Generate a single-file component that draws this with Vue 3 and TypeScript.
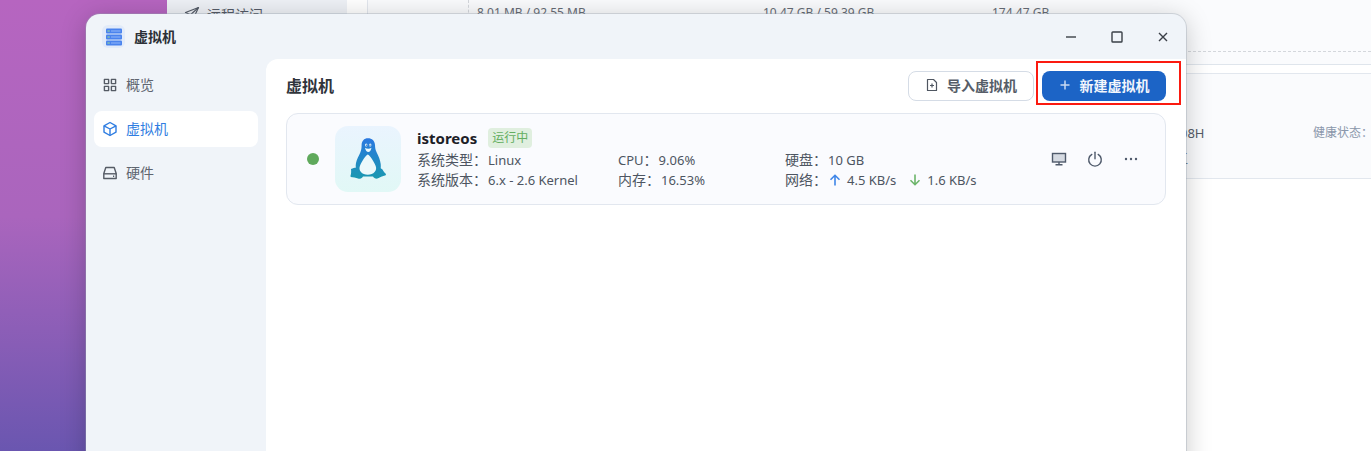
<script setup lang="ts">
interface NavItem {
  label: string
  icon: string
  active?: boolean
}

const navItems: NavItem[] = [
  { label: '概览', icon: 'grid' },
  { label: '虚拟机', icon: 'cube', active: true },
  { label: '硬件', icon: 'disk' },
]

const usage = ['8.01 MB / 92.55 MB', '10.47 GB / 59.39 GB', '174.47 GB']
</script>

<template>
  <div class="desktop">
    <!-- window behind the dialog -->
    <div class="back-win">
      <aside class="back-side">
        <div class="back-link">
          <svg width="16" height="16" viewBox="0 0 16 16" fill="none" stroke="#555c68" stroke-width="1.2" stroke-linejoin="round">
            <path d="M14.5 1.5 1.5 6.5l5 2.2 2.2 5.3z" />
            <path d="M6.5 8.7 14.5 1.5" />
          </svg>
          <span>远程访问</span>
        </div>
      </aside>
      <div class="back-main">
        <div class="back-top">
          <div class="back-stats">
            <span v-for="u in usage" :key="u">{{ u }}</span>
          </div>
        </div>
        <div class="back-card">
          <div class="back-col">
            <span>08H</span>
            <span class="back-cut">工</span>
          </div>
          <span class="back-label">健康状态：</span>
        </div>
      </div>
    </div>

    <!-- dialog -->
    <section class="dialog">
      <header class="titlebar">
        <div class="app-logo">
          <svg width="18" height="18" viewBox="0 0 18 18">
            <g v-for="y in [0.5, 6.5, 12.5]" :key="y">
              <rect x="1" :y="y" width="16" height="5" rx="1" fill="#4a83ee" />
              <rect x="2.4" :y="y + 2" width="2.4" height="1" fill="#9fe08e" />
              <rect x="6" :y="y + 2" width="9.5" height="1" fill="#8fb6f7" />
            </g>
          </svg>
        </div>
        <span class="app-name">虚拟机</span>
        <div class="win-ctrls">
          <svg width="14" height="14" viewBox="0 0 14 14" fill="none" stroke="#3a3f47" stroke-width="1.4"><path d="M2 7h10" /></svg>
          <svg width="14" height="14" viewBox="0 0 14 14" fill="none" stroke="#3a3f47" stroke-width="1.4"><rect x="2" y="2" width="10" height="10" rx="0.8" /></svg>
          <svg width="14" height="14" viewBox="0 0 14 14" fill="none" stroke="#3a3f47" stroke-width="1.4"><path d="M3 3l8 8M11 3l-8 8" /></svg>
        </div>
      </header>

      <div class="body">
        <nav class="side">
          <a v-for="item in navItems" :key="item.label" class="nav-item" :class="{ active: item.active }">
            <svg width="16" height="16" viewBox="0 0 16 16" fill="none" stroke="currentColor" stroke-width="1.4" stroke-linejoin="round">
              <template v-if="item.icon === 'grid'">
                <rect x="2.4" y="2.4" width="4.2" height="4.2" />
                <rect x="9.4" y="2.4" width="4.2" height="4.2" />
                <rect x="2.4" y="9.4" width="4.2" height="4.2" />
                <rect x="9.4" y="9.4" width="4.2" height="4.2" />
              </template>
              <template v-else-if="item.icon === 'cube'">
                <path d="M8 1.500 14 4.800v6.400L8 14.500 2 11.200V4.800z" />
                <path d="M2 4.800 8 8l6-3.200M8 8v6.500" />
              </template>
              <template v-else>
                <path d="M3.800 2.500h8.400l2 6v5H1.800v-5z" />
                <path d="M1.800 8.800h12.400" />
                <path d="M11 11.200h1.200" />
              </template>
            </svg>
            <span>{{ item.label }}</span>
          </a>
        </nav>

        <main class="content">
          <div class="toolbar">
            <h1>虚拟机</h1>
            <div class="actions">
              <button class="btn">
                <svg width="14" height="14" viewBox="0 0 14 14" fill="none" stroke="#4f5661" stroke-width="1.2" stroke-linejoin="round">
                  <path d="M2.500 1.500h6l3 3v8h-9z" />
                  <path d="M7 5.500v4M5 7.500h4" />
                </svg>
                导入虚拟机
              </button>
              <div class="primary-wrap">
                <button class="btn primary">
                  <svg width="12" height="12" viewBox="0 0 12 12" fill="none" stroke="#c7d9f2" stroke-width="1.5"><path d="M6 1.500v9M1.500 6h9" /></svg>
                  新建虚拟机
                </button>
                <span class="mark"></span>
              </div>
            </div>
          </div>

          <article class="vm-card">
            <span class="dot"></span>
            <div class="vm-icon">
              <svg width="36" height="42" viewBox="0 0 36 42">
                <defs>
                  <linearGradient id="tux" x1="0" y1="0" x2="0" y2="1">
                    <stop offset="0" stop-color="#2a78e0" />
                    <stop offset="1" stop-color="#1a98b0" />
                  </linearGradient>
                </defs>
                <path fill="url(#tux)" d="M18 .3C22 .3 24.800 3 25 7c.1 3 .5 5 1.600 7.200 2 3.800 3.600 7.800 4.100 11.800.2 1.500.1 3 0 4.300l1.800 1.200c1 2 2.500 3.500 3.500 4.500l-.3 1.200c-3.200.8-6.200 2.300-8.200 3.300-1.500.5-3-.2-4-1.200l-.5-.7H13l-.7 1c-1.300 1.200-2.800 1.400-4.300.9-2-.7-5-1.200-7.300-1.500l-.2-1.300c.7-1.700.8-4.200.5-6.700 2-.8 3.500-1.200 4.800-1.200-.2-1.800-.1-3.300.2-4.800.7-3.500 3-7.500 4.300-10.500 1-2.200 1.300-4.500 1.300-7C11.600 3 14 .3 18 .3z" />
                <path fill="#ecf9fb" d="M17.800 16.500c2.200 1 5.900 6.500 7.900 11.500 1.800 4.500-2 8.800-7.900 8.800s-9.700-4.300-7.900-8.800c2-5 5.700-10.500 7.900-11.500z" />
                <path fill="#ecf9fb" d="M15 9.800c1.800 1.200 4.700 1.200 6.500 0-.5 2.800-1.800 4.200-3.200 4.200s-2.800-1.400-3.300-4.200z" />
                <ellipse cx="16.200" cy="7" rx="1.200" ry="1.500" fill="#ecf9fb" />
                <ellipse cx="20.200" cy="7" rx="1.200" ry="1.500" fill="#ecf9fb" />
                <circle cx="16.400" cy="7.200" r=".6" fill="#1f5fb8" />
                <circle cx="20" cy="7.200" r=".6" fill="#1f5fb8" />
              </svg>
            </div>
            <div class="vm-info">
              <div class="vm-head">
                <strong>istoreos</strong>
                <span class="tag">运行中</span>
              </div>
              <div class="vm-grid">
                <span><span class="zh">系统类型：</span><span class="val">Linux</span></span>
                <span>CPU<span class="zh">：</span><span class="val">9.06%</span></span>
                <span><span class="zh">硬盘：</span><span class="val">10 GB</span></span>
                <span><span class="zh">系统版本：</span><span class="val">6.x - 2.6 Kernel</span></span>
                <span><span class="zh">内存：</span><span class="val">16.53%</span></span>
                <span class="net">
                  <span class="zh">网络：</span>
                  <svg class="arrow" width="12" height="12" viewBox="0 0 12 12" fill="none" stroke="#3f86e8" stroke-width="1.6"><path d="M6 11.500V1.500M1.500 5.800 6 1.300l4.500 4.500" /></svg>
                  <span class="rate">4.5 KB/s</span>
                  <svg class="arrow" width="12" height="12" viewBox="0 0 12 12" fill="none" stroke="#6cb56a" stroke-width="1.6"><path d="M6 .5v10M1.500 6.200 6 10.700l4.500-4.500" /></svg>
                  <span>1.6 KB/s</span>
                </span>
              </div>
            </div>
            <div class="vm-ops">
              <svg width="16" height="16" viewBox="0 0 16 16" fill="none" stroke="#4f5a6b" stroke-width="1.400">
                <rect x="1.500" y="2.500" width="13" height="8.500" fill="#d5dae2" />
                <path d="M8 11v2.500M4.500 13.800h7" />
              </svg>
              <svg width="16" height="16" viewBox="0 0 16 16" fill="none" stroke="#4f5a6b" stroke-width="1.400" stroke-linecap="round">
                <path d="M8 1.200v6.500" />
                <path d="M4.800 3.400a6.300 6.300 0 1 0 6.400 0" />
              </svg>
              <svg width="16" height="16" viewBox="0 0 16 16" fill="#4f5a6b">
                <circle cx="3" cy="8" r="1.200" />
                <circle cx="8" cy="8" r="1.200" />
                <circle cx="13" cy="8" r="1.200" />
              </svg>
            </div>
          </article>
        </main>
      </div>
    </section>
  </div>
</template>

<style scoped>
.desktop {
  position: relative;
  width: 1371px;
  height: 451px;
  overflow: hidden;
  background: linear-gradient(180deg, #b665c0 0%, #aa65bd 48%, #8c5eb7 73%, #6a56b0 100%);
  font-family: "Noto Sans", "Noto Sans CJK SC", sans-serif;
  font-size: 13px;
  color: #4d5561;
}

.back-win {
  position: absolute;
  left: 167px;
  top: 0;
  right: 0;
  bottom: 0;
  display: flex;
  background: #fff;
}
.back-side {
  width: 180px;
  flex: none;
  margin-right: 20px;
  background: #eef1f6;
}
.back-link {
  display: flex;
  align-items: center;
  gap: 7px;
  padding: 4px 0 0 17px;
  font-size: 14px;
  color: #555c68;
}
.back-main {
  flex: 1;
  min-width: 0;
  border-left: 1px solid #e3e7ee;
}
.back-top {
  position: relative;
  height: 64px;
  background: #fafbfd;
  border-bottom: 1px solid #dfe5ec;
}
.back-top::after {
  content: "";
  position: absolute;
  left: 0;
  right: 0;
  top: 51px;
  border-top: 1px dashed #d4d7dc;
}
.back-stats {
  display: grid;
  grid-template-columns: 286px 229px 200px;
  margin-left: 100px;
  padding: 5px 0 0 8px;
  height: 51px;
  box-sizing: border-box;
  border-left: 1px dashed #d4d7dc;
  font-size: 12px;
  line-height: 16px;
  color: #666c76;
}
.back-card {
  display: grid;
  grid-template-columns: 945px auto;
  align-items: start;
  height: 106px;
  margin-top: 8px;
  box-sizing: border-box;
  padding-top: 50px;
  background: #fafbfd;
  border-top: 1px solid #e2e7ee;
  border-bottom: 1px solid #e2e7ee;
}
.back-col {
  display: flex;
  flex-direction: column;
  gap: 7px;
  padding-left: 812px;
  line-height: 18px;
  color: #555c68;
}
.back-cut {
  margin-left: -6px;
  font-size: 14px;
}
.back-label {
  line-height: 18px;
  font-size: 12px;
  white-space: nowrap;
  color: #8a97ab;
}

.dialog {
  position: absolute;
  left: 86px;
  top: 14px;
  width: 1100px;
  height: 460px;
  display: flex;
  flex-direction: column;
  background: #f0f4f9;
  border-radius: 14px 14px 0 0;
  box-shadow: 0 0 0 1px rgba(150, 160, 175, 0.35), 0 4px 26px rgba(0, 0, 0, 0.22);
}
.titlebar {
  display: flex;
  align-items: center;
  height: 45px;
  flex: none;
  padding: 0 16px;
}
.app-logo {
  display: flex;
  align-items: center;
  justify-content: center;
  width: 23px;
  height: 23px;
  border-radius: 6px;
  background: #e2ebf9;
}
.app-name {
  margin-left: 9px;
  font-size: 14px;
  font-weight: 700;
  line-height: 18px;
  color: #2c3037;
}
.win-ctrls {
  display: flex;
  gap: 32px;
  margin-left: auto;
}

.body {
  display: flex;
  flex: 1;
  min-height: 0;
}
.side {
  width: 180px;
  flex: none;
  display: flex;
  flex-direction: column;
  gap: 8px;
  padding: 8px 8px 0;
  box-sizing: border-box;
}
.nav-item {
  display: flex;
  align-items: center;
  gap: 8px;
  width: 164px;
  height: 36px;
  padding: 0 0 1px 8px;
  box-sizing: border-box;
  border-radius: 8px;
  font-size: 14px;
  color: #5f6570;
}
.nav-item span {
  margin-bottom: 2px;
}
.nav-item svg {
  color: #555b65;
}
.nav-item.active {
  background: #fff;
  color: #2f7de1;
}
.nav-item.active svg {
  color: #2f7de1;
}

.content {
  flex: 1;
  background: #fff;
  border-top-left-radius: 12px;
  padding: 12px 20px 0;
}
.toolbar {
  display: flex;
  align-items: center;
  justify-content: space-between;
  height: 30px;
}
h1 {
  margin: 0 0 2px;
  font-size: 16px;
  font-weight: 700;
  color: #2f343b;
}
.actions {
  display: flex;
  gap: 8px;
}
.btn {
  display: flex;
  align-items: center;
  justify-content: center;
  gap: 8px;
  width: 126px;
  height: 30px;
  padding: 0 0 2px;
  border: 1px solid #d5dce6;
  border-radius: 8px;
  background: #fff;
  font: 700 14px "Noto Sans", "Noto Sans CJK SC", sans-serif;
  color: #565d68;
}
.primary-wrap {
  position: relative;
}
.btn.primary {
  width: 124px;
  gap: 9px;
  border: 0;
  background: #1c64c6;
  color: #f2f6fc;
}
.mark {
  position: absolute;
  left: -6px;
  top: -10px;
  width: 145px;
  height: 44px;
  box-sizing: border-box;
  border: 2px solid #fb1a10;
}

.vm-card {
  display: flex;
  align-items: center;
  height: 92px;
  margin-top: 12px;
  padding: 0 26px 0 20px;
  box-sizing: border-box;
  border: 1px solid #e2e7ef;
  border-radius: 12px;
  background: #fafbfe;
}
.dot {
  width: 12px;
  height: 12px;
  border-radius: 50%;
  background: #5fa95c;
}
.vm-icon {
  display: flex;
  align-items: center;
  justify-content: center;
  width: 66px;
  height: 66px;
  margin-left: 16px;
  border-radius: 13px;
  background: linear-gradient(180deg, #eaf4fe, #e1f8f6);
}
.vm-info {
  margin-left: 16px;
  padding-bottom: 2px;
  flex: 1;
}
.vm-head {
  display: flex;
  align-items: center;
  gap: 11px;
  height: 22px;
  margin-bottom: 1px;
}
.vm-head strong {
  font-size: 15px;
  font-weight: 700;
  color: #1c2027;
}
.tag {
  padding: 0 4px;
  height: 20px;
  line-height: 20px;
  border-radius: 4px;
  background: #e0efdf;
  color: #63ae60;
  font-size: 12px;
}
.vm-grid {
  display: grid;
  grid-template-columns: 201px 167px auto;
  grid-auto-rows: 20px;
  line-height: 20px;
}
.zh {
  font-size: 14px;
}
.val {
  margin-left: 1px;
}
.net {
  display: flex;
  align-items: center;
}
.arrow {
  margin: 0 6px 0 2px;
}
.rate {
  margin-right: 11px;
}
.vm-ops {
  display: flex;
  gap: 20px;
}
</style>
